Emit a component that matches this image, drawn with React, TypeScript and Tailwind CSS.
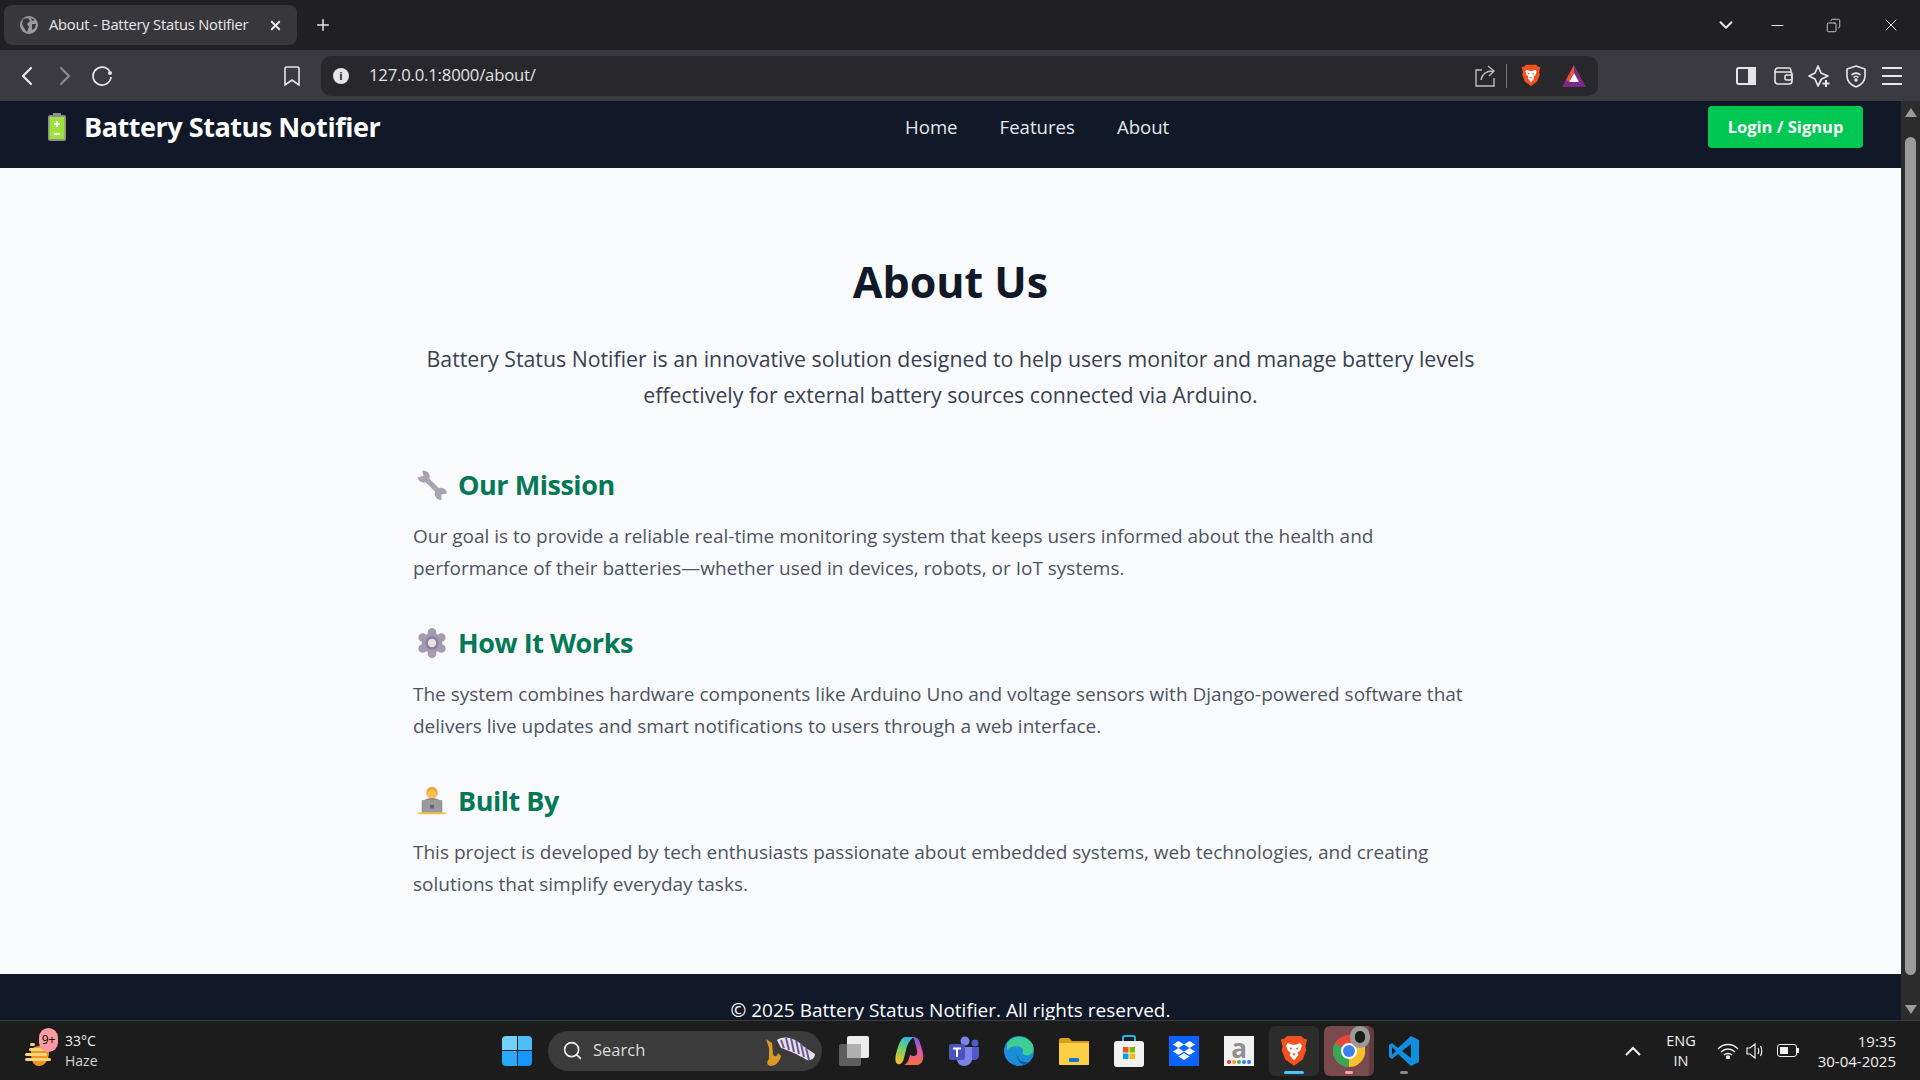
import { ChevronDown, ChevronLeft, ChevronRight, Copy, Minus, Plus, Search, X } from "lucide-react";
import type { ReactNode } from "react";

const sections = [
  {
    title: "Our Mission",
    icon: <WrenchEmoji />,
    lines: [
      "Our goal is to provide a reliable real-time monitoring system that keeps users informed about the health and",
      "performance of their batteries—whether used in devices, robots, or IoT systems.",
    ],
  },
  {
    title: "How It Works",
    icon: <GearEmoji />,
    lines: [
      "The system combines hardware components like Arduino Uno and voltage sensors with Django-powered software that",
      "delivers live updates and smart notifications to users through a web interface.",
    ],
  },
  {
    title: "Built By",
    icon: <CoderEmoji />,
    lines: [
      "This project is developed by tech enthusiasts passionate about embedded systems, web technologies, and creating",
      "solutions that simplify everyday tasks.",
    ],
  },
];

function WrenchEmoji() {
  return (
    <svg viewBox="0 0 32 32" className="h-[30px] w-[30px]">
      <path d="M8 8 L25 25" stroke="#a9a2b3" strokeWidth="5.500" />
      <circle cx="7" cy="7" r="6.500" fill="#a9a2b3" />
      <circle cx="25.500" cy="25.500" r="6.500" fill="#a9a2b3" />
      <path d="M5 -1 L7 6 L1 8 L-2 3 Z" fill="#f9fafb" />
      <path d="M33 25 L26 26 L26 33 L33 33 Z" fill="#f9fafb" />
    </svg>
  );
}

function GearEmoji() {
  return (
    <svg viewBox="0 0 32 32" className="h-[30px] w-[30px]">
      <g fill="#a39cad">
        <circle cx="16" cy="16" r="11" />
        <circle cx="16" cy="4.500" r="4.500" />
        <circle cx="16" cy="27.500" r="4.500" />
        <circle cx="6" cy="10.200" r="4.500" />
        <circle cx="26" cy="10.200" r="4.500" />
        <circle cx="6" cy="21.800" r="4.500" />
        <circle cx="26" cy="21.800" r="4.500" />
      </g>
      <circle cx="16" cy="16" r="7" fill="#8b7fa3" />
      <circle cx="16" cy="16" r="4.500" fill="#e4e1e8" />
    </svg>
  );
}

function CoderEmoji() {
  return (
    <svg viewBox="0 0 32 32" className="h-[30px] w-[30px]">
      <path d="M10 7 C10 3 13 1 16 1 C19 1 22 3 22 7 L22 10 L10 10 Z" fill="#f0a33a" />
      <circle cx="16" cy="9" r="5" fill="#f7c052" />
      <path d="M7 18 C7 14 11 13 16 13 C21 13 25 14 25 18 L25 20 L7 20 Z" fill="#8a8491" />
      <rect x="5" y="15" width="22" height="14" rx="1" fill="#9a9a9e" />
      <rect x="14" y="20" width="4" height="4" fill="#6b5d85" />
      <path d="M2 28 L30 28 C31 28 31 30 30 30 L2 30 C1 30 1 28 2 28 Z" fill="#f4c04e" />
    </svg>
  );
}

function BatteryEmoji() {
  return (
    <svg viewBox="0 0 18 28" className="h-7 w-[18px]">
      <rect x="5" y="0" width="8" height="3" rx="0.500" fill="#8d8d8d" />
      <rect x="0" y="2" width="18" height="26" rx="2" fill="#8d8d8d" />
      <rect x="1.500" y="4" width="15" height="22" fill="#9ce23b" />
      <path d="M8 8 h2 v2 h2 v2 h-2 v2 h-2 v-2 h-2 v-2 h2 Z" fill="#fff" />
      <rect x="6" y="20" width="6" height="2" fill="#fff" />
    </svg>
  );
}

function BraveLogo({ size }: { size: number }) {
  return (
    <svg viewBox="0 0 32 36" width={size} height={(size * 36) / 32}>
      <path d="M8 1 L24 1 L27 4 L31 5 L29 13 L30 17 L26 28 L16 35 L6 28 L2 17 L3 13 L1 5 L5 4 Z" fill="#f4511e" />
      <path d="M9 9 L14 11 L18 11 L23 9 L25 12 L23 18 L20 20 L21 23 L16 29 L11 23 L12 20 L9 18 L7 12 Z" fill="#fff" />
      <path d="M11 14 L14 15 L12 17 Z M21 14 L18 15 L20 17 Z M14 21 L18 21 L16 24 Z" fill="#f4511e" />
    </svg>
  );
}

function BatTriangle() {
  return (
    <svg viewBox="0 0 24 22" className="h-[22px] w-[24px]">
      <path d="M12 0 L24 22 L0 22 Z" fill="#7b2a86" />
      <path d="M12 8 L17 17 L7 17 Z" fill="#fff" />
      <path d="M12 0 L4 15 L7 17 L12 8 Z" fill="#f0502a" />
    </svg>
  );
}

function Globe() {
  return (
    <svg viewBox="0 0 18 18" className="h-[18px] w-[18px]">
      <circle cx="9" cy="9" r="9" fill="#9a9aa0" />
      <path d="M3 3 L8 2 L10 5 L7 8 L9 11 L7 16 L4 12 L2 8 Z M12 8 L16 8 L15 12 L12 14 Z M11 2 L15 4 L12 5 Z" fill="#38383c" />
    </svg>
  );
}

function ReloadIcon() {
  return (
    <svg viewBox="0 0 22 22" className="ml-[10px] h-[22px] w-[22px]" fill="none" stroke="currentColor" strokeWidth="1.700">
      <path d="M18.500 6 A9 9 0 1 0 20 12" />
      <circle cx="19" cy="8" r="2" fill="currentColor" stroke="none" />
    </svg>
  );
}

function ToolbarIcons() {
  return (
    <div className="flex items-center gap-[12.5px] text-[#e6e6e8]">
      <svg viewBox="0 0 24 24" className="h-6 w-6" fill="none" stroke="currentColor" strokeWidth="2">
        <rect x="3" y="4" width="18" height="16" rx="2" />
        <rect x="15" y="4" width="6" height="16" fill="currentColor" />
      </svg>
      <svg viewBox="0 0 24 24" className="h-6 w-6" fill="none" stroke="currentColor" strokeWidth="1.600">
        <path d="M4 8 C4 5 5 4 7 4 L18 4 C20 4 20 6 20 8 M4 8 L4 17 C4 19 5 20 7 20 L18 20 C20 20 21 19 21 17 L21 10 C21 8.500 20 8 18 8 L4 8 Z" />
        <rect x="14" y="11" width="7" height="5" rx="1.500" />
      </svg>
      <svg viewBox="0 0 24 24" className="h-6 w-6" fill="none" stroke="currentColor" strokeWidth="1.700">
        <path d="M11 2 L14 9 L21 12 L14.500 15 L11 22 L8 15 L2 12 L8 9 Z" strokeLinejoin="round" />
        <path d="M19 16 V23 M15.500 19.500 H22.500" strokeWidth="2" />
      </svg>
      <svg viewBox="0 0 24 24" className="h-6 w-6" fill="none" stroke="currentColor" strokeWidth="1.600">
        <path d="M12 2 L21 5 V12 C21 17 17 21 12 23 C7 21 3 17 3 12 V5 Z" />
        <path d="M7.500 11 C10 8.500 14 8.500 16.500 11 M9.500 13.500 C11 12 13 12 14.500 13.500" />
        <circle cx="12" cy="16" r="1" fill="currentColor" />
      </svg>
      <svg viewBox="0 0 24 24" className="h-6 w-6" fill="none" stroke="currentColor" strokeWidth="2">
        <path d="M2 4 H22 M2 12 H22 M2 20 H22" />
      </svg>
    </div>
  );
}

function Chrome() {
  return (
    <div className="flex h-[50px] shrink-0 items-end bg-[#202024] pl-1">
      <div className="mb-[5px] flex h-10 w-[293px] items-center rounded-lg bg-[#38383c] pl-[16px] pr-[14px] text-[#e8e8ea]">
        <Globe />
        <span className="ml-[11px] flex-1 pb-[1px] text-[14.7px] tracking-[-0.2px]">About - Battery Status Notifier</span>
        <X size={15} strokeWidth={3} />
      </div>
      <div className="mb-[5px] flex h-10 items-center pl-[17px] text-[#e8e8ea]">
        <Plus size={18} strokeWidth={2} />
      </div>
      <div className="mb-[5px] ml-auto flex h-10 items-center text-[#e8e8ea]">
        <ChevronDown size={22} strokeWidth={2.200} />
        <Minus size={19} strokeWidth={1.300} className="ml-[31px]" />
        <Copy size={15} strokeWidth={1.300} className="ml-[39px] -scale-x-100" />
        <X size={20} strokeWidth={1.200} className="ml-[40px] mr-[19px]" />
      </div>
    </div>
  );
}

function Toolbar() {
  return (
    <div className="flex h-[51px] shrink-0 items-center bg-[#3b3a40] text-[#e6e6e8]">
      <ChevronLeft size={32} strokeWidth={1.700} className="ml-[11px]" />
      <ChevronRight size={32} strokeWidth={1.700} className="ml-[6px] text-[#8a8a8e]" />
      <ReloadIcon />
      <svg viewBox="0 0 16 20" className="ml-[171px] h-5 w-4" fill="none" stroke="currentColor" strokeWidth="1.600">
        <path d="M1 2 C1 1 2 1 3 1 L13 1 C14 1 15 1 15 2 L15 19 L8 14 L1 19 Z" />
      </svg>
      <div className="ml-[21px] flex h-10 w-[1277px] items-center rounded-[10px] bg-[#28272c] pl-[12px]">
        <span className="flex h-4 w-4 items-center justify-center rounded-full bg-[#e6e6e8] text-[11px] font-bold leading-none text-[#28272c]">i</span>
        <span className="ml-[20px] flex-1 pb-[2px] text-[16.7px] tracking-[-0.2px] text-[#e2e2e4]">127.0.0.1:8000/about/</span>
        <svg viewBox="0 0 22 22" className="h-[22px] w-[22px]" fill="none" stroke="#bdbdc0" strokeWidth="1.400">
          <path d="M8 5 L2 5 L2 21 L20 21 L20 13 M7 15 C8 9 12 6 19 6 M14 1 L20 6 L15 11" />
        </svg>
        <div className="ml-[10px] h-6 w-px bg-[#77777c]" />
        <div className="ml-[14px]"><BraveLogo size={20} /></div>
        <div className="ml-[21px] mr-[12px]"><BatTriangle /></div>
      </div>
      <div className="ml-auto mr-[16px]"><ToolbarIcons /></div>
    </div>
  );
}

function Page() {
  return (
    <div className="min-w-0 flex-1 overflow-hidden bg-[#f9fafb]">
      <nav className="flex h-[67px] items-start justify-between bg-[#111827] pl-[48px] pr-[38px] pt-[5px] text-white">
        <div className="flex h-[42px] items-center gap-[18px]">
          <BatteryEmoji />
          <span className="text-[27px] font-bold tracking-[-0.46px]">Battery Status Notifier</span>
        </div>
        <div className="mr-[14px] flex h-[42px] items-center gap-[42px] text-[18.6px] text-[#e5e7eb]">
          <span>Home</span>
          <span>Features</span>
          <span>About</span>
        </div>
        <button type="button" className="h-[42px] w-[155px] rounded bg-[#00c853] text-[16.5px] font-bold text-white">
          Login / Signup
        </button>
      </nav>
      <main className="h-[806px] px-[413px] pt-[80px]">
        <h1 className="text-center text-[43px] font-bold leading-[68px] text-[#111827]">About Us</h1>
        <p className="-mx-[20px] mt-[25px] text-center text-[21.3px] leading-[36px] text-[#374151]">
          Battery Status Notifier is an innovative solution designed to help users monitor and manage battery levels
          <br />
          effectively for external battery sources connected via Arduino.
        </p>
        <div className="mt-[53px] flex flex-col gap-[40px]">
          {sections.map((section) => (
            <section key={section.title}>
              <h2 className="flex h-[38px] items-center gap-[11px] pl-[4px] text-[27px] font-bold tracking-[-0.46px] text-[#047857]">
                {section.icon}
                {section.title}
              </h2>
              <p className="mt-[16px] text-[19px] leading-[32px] text-[#4b5563]">
                {section.lines[0]}
                <br />
                {section.lines[1]}
              </p>
            </section>
          ))}
        </div>
      </main>
      <footer className="h-[100px] bg-[#111827] pt-[24px] text-center text-[19px] leading-[24px] text-white">
        © 2025 Battery Status Notifier. All rights reserved.
      </footer>
    </div>
  );
}

function Scrollbar() {
  return (
    <div className="flex w-[19px] shrink-0 flex-col items-center bg-[#2c2c2c] pt-[7px]">
      <div className="h-0 w-0 border-x-[6px] border-b-[9px] border-x-transparent border-b-[#9b9b9b]" />
      <div className="mt-[20px] h-[838px] w-[11px] rounded-full bg-[#9b9b9b]" />
      <div className="mt-[30px] h-0 w-0 border-x-[6px] border-t-[9px] border-x-transparent border-t-[#9b9b9b]" />
    </div>
  );
}

function WeatherIcon() {
  return (
    <div className="relative h-[30px] w-[30px]">
      <svg viewBox="0 0 30 30" className="h-[30px] w-[30px]">
        <path d="M6 16 C6 8 24 8 24 16 C24 26 18 30 14 30 C8 30 6 24 6 16 Z" fill="#f0961e" />
        <rect x="5" y="7" width="5" height="3" rx="1.500" fill="#f5d67b" />
        <rect x="4" y="12" width="16" height="3" rx="1.500" fill="#f5d67b" />
        <rect x="0" y="17" width="22" height="3" rx="1.500" fill="#f5d67b" />
        <rect x="0" y="22" width="26" height="3" rx="1.500" fill="#f5d67b" />
      </svg>
      <span className="absolute -top-[8px] left-[14px] flex h-[24px] w-[19px] items-center justify-center rounded-full bg-[#ff9aa2] text-[12px] text-black">9+</span>
    </div>
  );
}

function SearchArt() {
  return (
    <svg viewBox="0 0 52 30" className="h-[30px] w-[56px]">
      <path d="M3 3 L9 7 L10 18 C11 22 15 20 15 17 L18 20 C17 26 12 30 8 30 C4 30 3 26 6 23 L6 12 Z" fill="#d99a25" />
      <path d="M14 4 C22 -1 32 2 40 10 L52 18 C52 22 48 25 44 24 C34 18 24 14 18 12 Z" fill="#e6dff0" />
      <path d="M18 4 L21 12 M23 2 L26 14 M28 2 L31 16 M33 4 L36 18 M38 8 L41 21 M43 12 L46 24" stroke="#6a5a8c" strokeWidth="2" />
    </svg>
  );
}

function WindowsLogo() {
  return (
    <div className="grid h-[30px] w-[30px] grid-cols-2 gap-px">
      <div className="rounded-tl-sm bg-[#72d1f8]" />
      <div className="rounded-tr-sm bg-[#4dbcf7]" />
      <div className="rounded-bl-sm bg-[#2aa8fa]" />
      <div className="rounded-br-sm bg-[#1497fb]" />
    </div>
  );
}

function AppSlot({ children, active, tone }: { children: ReactNode; active?: string; tone?: string }) {
  return (
    <div className={`relative flex h-[50px] w-[50px] items-center justify-center rounded-md ${tone ?? ""}`}>
      {children}
      {active ? <span className={`absolute bottom-[2px] h-[3px] rounded-full ${active}`} /> : null}
    </div>
  );
}

function TaskView() {
  return (
    <svg viewBox="0 0 30 30" className="h-[30px] w-[30px]">
      <rect x="0" y="8" width="22" height="22" rx="2" fill="#5e5e5e" />
      <rect x="8" y="0" width="22" height="22" rx="2" fill="#ececec" />
      <rect x="8" y="8" width="14" height="14" fill="#b0b0b0" />
    </svg>
  );
}

function CopilotIcon() {
  return (
    <svg viewBox="0 0 30 30" className="h-[30px] w-[30px]">
      <defs>
        <linearGradient id="cpA" x1="0.600" y1="0" x2="0.300" y2="1">
          <stop offset="0" stopColor="#2fb7ea" />
          <stop offset="0.450" stopColor="#6fcf6a" />
          <stop offset="1" stopColor="#f7c12c" />
        </linearGradient>
        <linearGradient id="cpB" x1="0.500" y1="0" x2="0.500" y2="1">
          <stop offset="0" stopColor="#6f5be8" />
          <stop offset="0.550" stopColor="#e8589e" />
          <stop offset="1" stopColor="#f4703c" />
        </linearGradient>
      </defs>
      <path d="M11 1 L20 1 C16 3 13 9 12 14 L10 22 C9 27 6 29 4 28 C1 27 1 23 2 18 C4 11 6 2 11 1 Z" fill="url(#cpA)" />
      <path d="M19 1 C23 1 25 3 26 7 C28 13 30 18 29 23 C28 27 26 29 22 29 L10 29 C14 27 15 23 16 19 L19 20 C22 20 24 18 23 15 C22 10 21 5 19 1 Z" fill="url(#cpB)" />
    </svg>
  );
}

function TeamsIcon() {
  return (
    <svg viewBox="0 0 30 30" className="h-[30px] w-[30px]">
      <circle cx="16" cy="5" r="4.500" fill="#7b83eb" />
      <circle cx="26" cy="7" r="3.500" fill="#5059c9" />
      <path d="M20 11 H30 V19 C30 23 27 24 25 24 H20 Z" fill="#5059c9" />
      <path d="M8 11 H23 V23 C23 27 19 30 15 30 C11 30 8 27 8 23 Z" fill="#7b83eb" />
      <rect x="0" y="8" width="16" height="16" rx="2" fill="#4b53bc" />
      <path d="M4 11.500 H12 V13.500 H9 V21 H7 V13.500 H4 Z" fill="#fff" />
    </svg>
  );
}

function EdgeIcon() {
  return (
    <svg viewBox="0 0 30 30" className="h-[30px] w-[30px]">
      <circle cx="15" cy="15" r="15" fill="#1a8fd8" />
      <path d="M3 8 C7 0 20 -2 27 6 C31 11 30 18 25 19 C20 20 17 18 19 15 C19 10 10 8 3 14 Z" fill="#3ccf91" />
      <path d="M13 16 C12 22 17 27 24 26 C20 31 10 31 6 24 C9 27 12 24 13 16 Z" fill="#0c59a4" />
      <path d="M3 14 C8 9 18 10 19 15 C14 13 11 16 13 21 C14 25 17 28 20 29 C10 31 1 24 3 14 Z" fill="#1a8fd8" />
    </svg>
  );
}

function FolderIcon() {
  return (
    <svg viewBox="0 0 30 30" className="h-[30px] w-[30px]">
      <path d="M0 4 C0 3 1 2 2 2 L10 2 L13 5 L30 5 L30 12 L0 12 Z" fill="#d9a019" />
      <rect x="0" y="7" width="30" height="22" rx="1" fill="#fccf46" />
      <rect x="10" y="22" width="10" height="4" rx="1" fill="#0f78d4" />
    </svg>
  );
}

function StoreIcon() {
  return (
    <svg viewBox="0 0 30 32" className="h-[32px] w-[30px]">
      <path d="M9 7 V3 C9 1 10 1 11 1 H19 C20 1 21 1 21 3 V7" fill="none" stroke="#2bb3e8" strokeWidth="2" />
      <rect x="0" y="6" width="30" height="26" rx="3" fill="#f2f2f2" />
      <rect x="9" y="12" width="5.500" height="5.500" fill="#f25022" />
      <rect x="15.500" y="12" width="5.500" height="5.500" fill="#7fba00" />
      <rect x="9" y="18.500" width="5.500" height="5.500" fill="#00a4ef" />
      <rect x="15.500" y="18.500" width="5.500" height="5.500" fill="#ffb900" />
    </svg>
  );
}

function DropboxIcon() {
  return (
    <svg viewBox="0 0 30 30" className="h-[30px] w-[30px]">
      <rect width="30" height="30" fill="#0d63ff" />
      <path d="M9.500 5 L15 8.500 L9.500 12 L4 8.500 Z M20.500 5 L26 8.500 L20.500 12 L15 8.500 Z M9.500 12 L15 15.500 L9.500 19 L4 15.500 Z M20.500 12 L26 15.500 L20.500 19 L15 15.500 Z M9.500 20.500 L15 17 L20.500 20.500 L15 24 Z" fill="#fff" />
    </svg>
  );
}

function AmazonTile() {
  return (
    <div className="flex h-[30px] w-[30px] flex-col items-center bg-[#f2f2f2]">
      <span className="text-[26px] font-bold leading-[24px] text-[#8f8f8f]">a</span>
      <div className="flex gap-[1px]">
        <span className="h-[4px] w-[4px] rounded-full bg-[#e5322d]" />
        <span className="h-[4px] w-[4px] rounded-full bg-[#f29d1f]" />
        <span className="h-[4px] w-[4px] rounded-full bg-[#4caf50]" />
        <span className="h-[4px] w-[4px] rounded-full bg-[#2f80ed]" />
        <span className="h-[4px] w-[4px] rounded-full bg-[#2f80ed]" />
      </div>
    </div>
  );
}

function ChromeIcon() {
  return (
    <div className="relative">
      <svg viewBox="0 0 32 32" className="h-[32px] w-[32px]">
        <circle cx="16" cy="16" r="16" fill="#e8453c" />
        <path d="M16 16 L30 8 A16 16 0 0 1 16 32 Z" fill="#f9c02e" />
        <path d="M16 16 L16 32 A16 16 0 0 1 2 8 Z" fill="#3aa757" />
        <circle cx="16" cy="16" r="8" fill="#fff" />
        <circle cx="16" cy="16" r="6" fill="#3b82e8" />
      </svg>
      <span className="absolute -right-[5px] -top-[9px] h-[22px] w-[20px] rounded-full border-[5px] border-[#9a9a9a] bg-[#1a1a1a]" />
    </div>
  );
}

function VsCodeIcon() {
  return (
    <svg viewBox="0 0 30 30" className="h-[30px] w-[30px]">
      <path d="M22 0 L30 4 V26 L22 30 L9 18 L3 23 L0 21 V9 L3 7 L9 12 Z" fill="#0f8fdd" />
      <path d="M22 8 L13 15 L22 22 Z" fill="#1c1c1c" />
      <path d="M3 11 L7 15 L3 19 Z" fill="#1c1c1c" />
    </svg>
  );
}

function Tray() {
  return (
    <div className="flex items-center text-[#f0f0f0]">
      <svg viewBox="0 0 16 10" className="h-[10px] w-4" fill="none" stroke="currentColor" strokeWidth="2">
        <path d="M1 9 L8 2 L15 9" />
      </svg>
      <div className="ml-[23px] w-[34px] text-center text-[14.5px] leading-[20px]">
        ENG
        <br />
        IN
      </div>
      <svg viewBox="0 0 22 16" className="ml-[19px] h-4 w-[22px]" fill="none" stroke="currentColor" strokeWidth="1.300">
        <path d="M1 6 C6 0 16 0 21 6 M4 9 C8 5 14 5 18 9 M7 12 C9 10 13 10 15 12" />
        <circle cx="11" cy="14.500" r="1.500" fill="currentColor" />
      </svg>
      <svg viewBox="0 0 20 16" className="ml-[7px] h-4 w-5" fill="none" stroke="currentColor" strokeWidth="1.200">
        <path d="M1 5 H4 L9 1 V15 L4 11 H1 Z M12 5 C13 7 13 9 12 11 M14.500 3 C16 6 16 10 14.500 13" />
      </svg>
      <div className="ml-[11px] flex h-[13px] w-[20px] items-center rounded-[3px] border border-current p-[2px]">
        <div className="h-full w-[8px] bg-current" />
      </div>
      <div className="h-[5px] w-[2px] bg-current" />
      <div className="ml-[11px] w-[86px] text-right text-[15px] leading-[20px]">
        19:35
        <br />
        30-04-2025
      </div>
    </div>
  );
}

function Taskbar() {
  return (
    <div className="flex h-[60px] shrink-0 items-center border-t border-[#3c3c3c] bg-[#1c1c1c] pl-[25px] pr-[24px] text-[#f0f0f0]">
      <div className="flex w-[477px] items-center">
        <WeatherIcon />
        <div className="ml-[10px] text-[14px] leading-[20px]">
          33°C
          <br />
          <span className="text-[#d6d6d6]">Haze</span>
        </div>
      </div>
      <WindowsLogo />
      <div className="ml-[16px] flex h-10 w-[274px] items-center rounded-full bg-[#3b3b3b] pl-[14px] pr-[5px]">
        <Search size={21} strokeWidth={1.800} />
        <span className="ml-[10px] flex-1 text-[16.5px] text-[#dddddd]">Search</span>
        <SearchArt />
      </div>
      <div className="ml-[7px] flex items-center gap-[5px]">
        <AppSlot><TaskView /></AppSlot>
        <AppSlot><CopilotIcon /></AppSlot>
        <AppSlot><TeamsIcon /></AppSlot>
        <AppSlot><EdgeIcon /></AppSlot>
        <AppSlot><FolderIcon /></AppSlot>
        <AppSlot><StoreIcon /></AppSlot>
        <AppSlot><DropboxIcon /></AppSlot>
        <AppSlot><AmazonTile /></AppSlot>
        <AppSlot tone="bg-[#2c2c2c]" active="w-[20px] bg-[#4cc2ff]"><BraveLogo size={28} /></AppSlot>
        <AppSlot tone="bg-[#7a4a4f] border-r-[5px] border-r-[#5e3c40] pl-[5px]" active="w-[8px] bg-[#ff9aa8]"><ChromeIcon /></AppSlot>
        <AppSlot active="w-[8px] bg-[#8a8a8a]"><VsCodeIcon /></AppSlot>
      </div>
      <div className="ml-auto"><Tray /></div>
    </div>
  );
}

export default function App() {
  return (
    <div className="flex h-screen flex-col overflow-hidden font-['Open_Sans','Noto_Sans',sans-serif]">
      <Chrome />
      <Toolbar />
      <div className="flex min-h-0 flex-1">
        <Page />
        <Scrollbar />
      </div>
      <Taskbar />
    </div>
  );
}
